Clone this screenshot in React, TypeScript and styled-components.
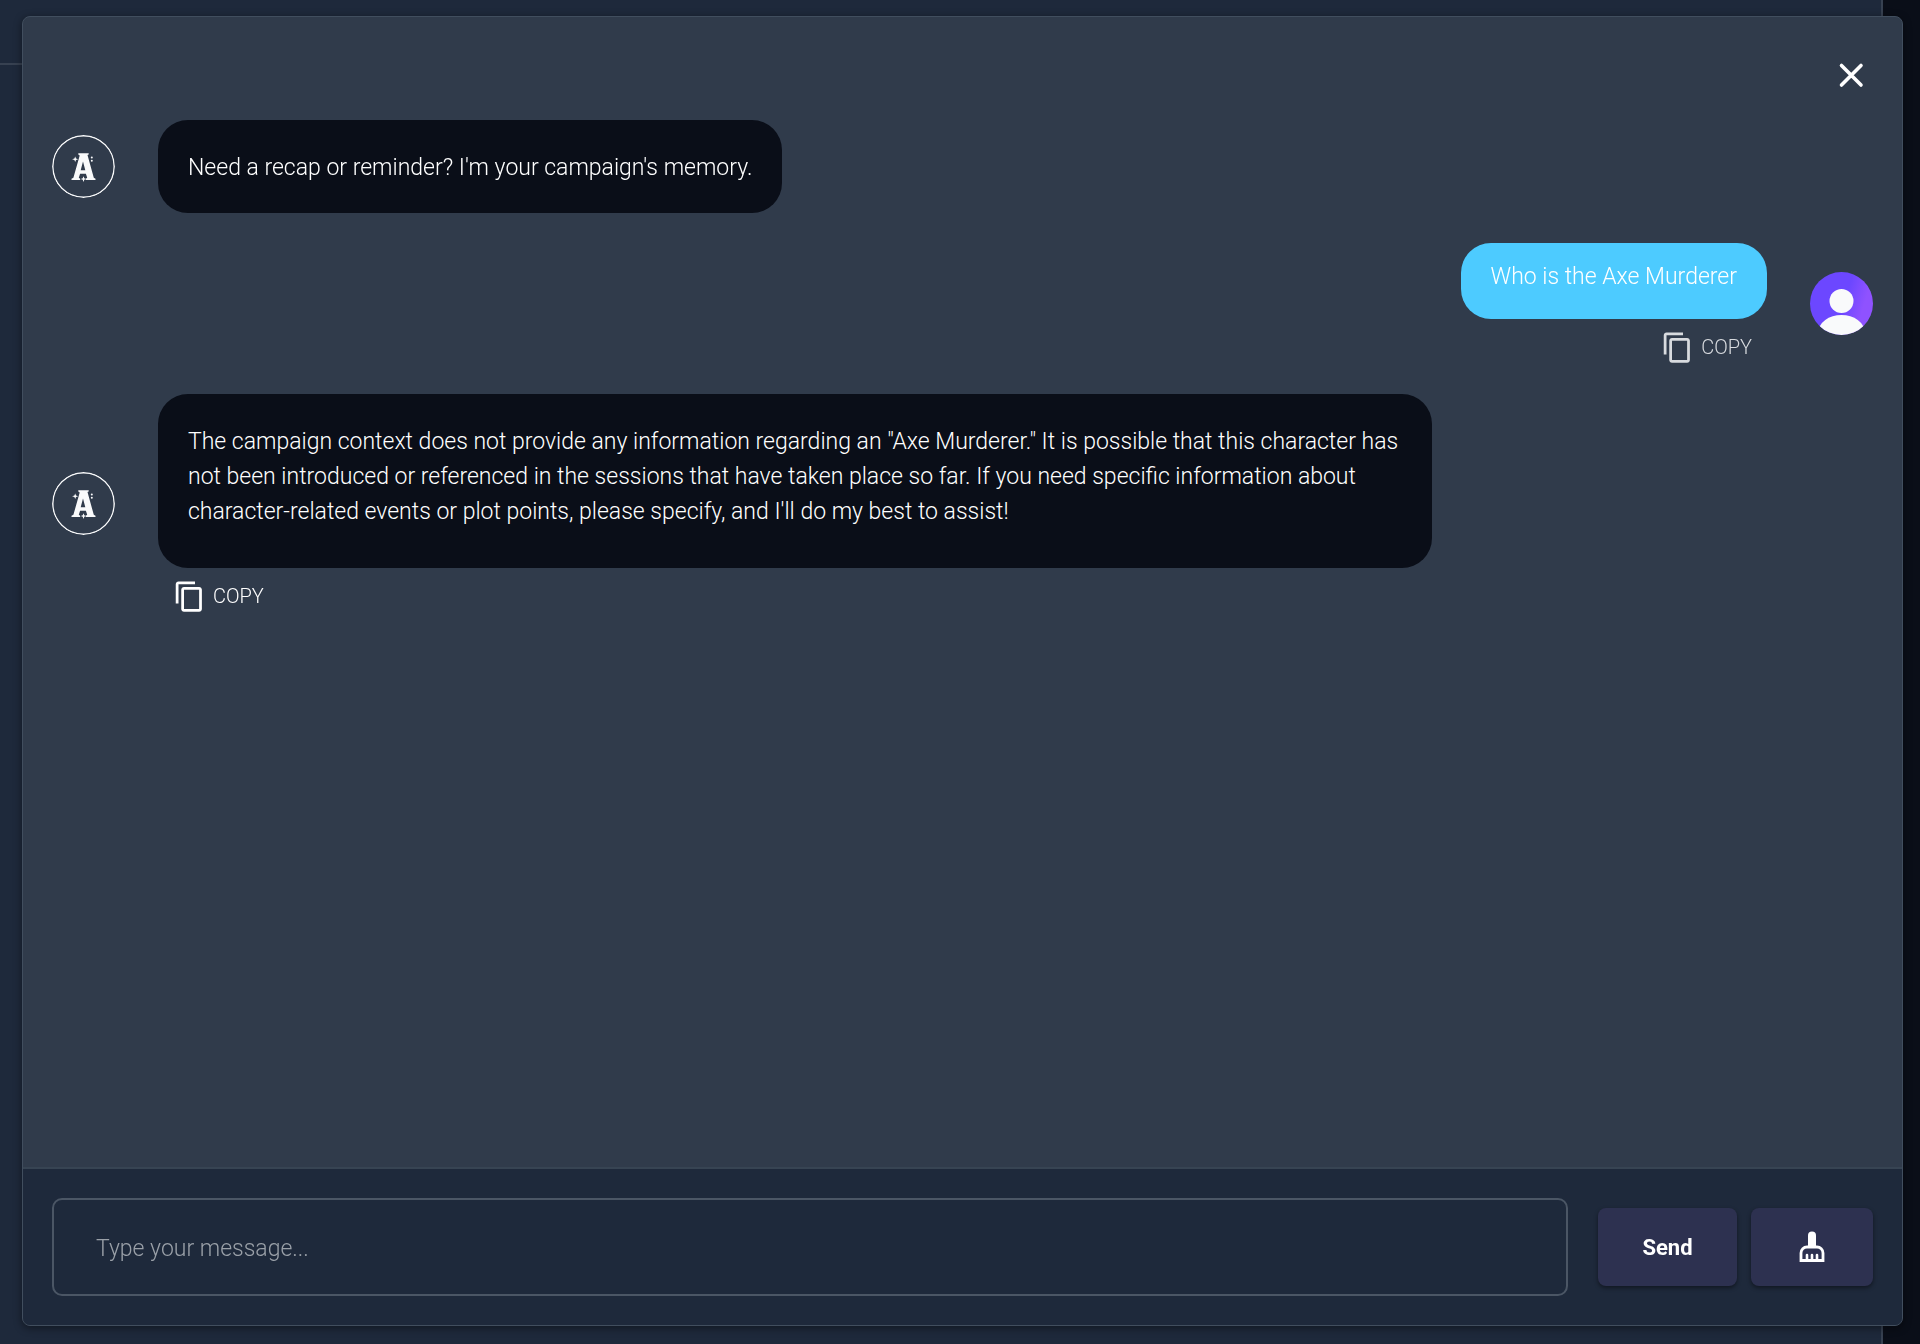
import React from "react";
import styled, { createGlobalStyle } from "styled-components";

const font = `Roboto, "Liberation Sans", sans-serif`;

const GlobalStyle = createGlobalStyle`
  *, *::before, *::after { box-sizing: border-box; }
  body {
    margin: 0;
    background: #0a0e18;
    color: #fff;
    font-family: ${font};
    font-size: 23px;
    font-weight: 300;
    line-height: 35px;
  }
`;

const Page = styled.div`
  min-height: 100vh;
  padding-right: 37px;
  display: flex;
`;

const PagePanel = styled.div`
  flex: 1;
  background: #1e293b;
  border-right: 2px solid #374151;
`;

const PageHeader = styled.div`
  height: 65px;
  border-bottom: 2px solid #374151;
`;

const Overlay = styled.div`
  position: fixed;
  inset: 0;
  padding: 16px 17px 18px 22px;
  display: flex;
`;

const Dialog = styled.section`
  flex: 1;
  display: flex;
  flex-direction: column;
  min-width: 0;
  background: #303b4b;
  border: 1px solid #414e5e;
  border-radius: 8px;
  overflow: hidden;
  box-shadow: 0 2px 8px rgba(0, 0, 0, 0.45);
`;

const DialogBar = styled.header`
  display: flex;
  justify-content: flex-end;
  padding: 40px 32px 25px;
`;

const IconButton = styled.button`
  display: flex;
  padding: 0;
  border: 0;
  background: none;
  color: #fff;
  cursor: pointer;
`;

const Messages = styled.div`
  flex: 1;
  min-height: 0;
  overflow-y: auto;
  display: flex;
  flex-direction: column;
  gap: 30px;
  padding: 0 29px;
`;

const Row = styled.article<{ $own?: boolean }>`
  display: flex;
  flex-direction: ${(p) => (p.$own ? "row-reverse" : "row")};
  align-items: center;
  gap: 43px;
`;

const Column = styled.div<{ $own?: boolean }>`
  flex: 1;
  min-width: 0;
  display: flex;
  flex-direction: column;
  align-items: ${(p) => (p.$own ? "flex-end" : "flex-start")};
  padding-right: ${(p) => (p.$own ? 0 : 16)}px;
`;

const Bubble = styled.p<{ $own?: boolean; $copy?: boolean }>`
  margin: 0;
  max-width: 75%;
  padding: ${(p) => (p.$own ? "16px 30px 25px" : p.$copy ? "30px 30px 39px" : "30px 30px 28px")};
  border-radius: 30px;
  background: ${(p) => (p.$own ? "#4dcbff" : "#0a0e18")};
`;

const CopyButton = styled.button<{ $own?: boolean }>`
  display: flex;
  align-items: center;
  gap: 7px;
  height: 33px;
  margin: 12px 15px 0;
  padding: 0;
  border: 0;
  background: none;
  color: ${(p) => (p.$own ? "#d8dbdf" : "#fff")};
  font: 300 20px/33px ${font};
  cursor: pointer;
`;

const Avatar = styled.div`
  flex: none;
  width: 63px;
  height: 63px;
  border-radius: 50%;
  overflow: hidden;

  svg { display: block; }
`;

const Composer = styled.form`
  display: flex;
  align-items: center;
  gap: 14px;
  padding: 29px;
  background: #1e293b;
  border-top: 2px solid #374453;
`;

const MessageInput = styled.input`
  flex: 1;
  min-width: 0;
  height: 98px;
  margin-right: 16px;
  padding: 2px 42px 0;
  border: 2px solid #4b5665;
  border-radius: 10px;
  background: transparent;
  color: #fff;
  font: 300 23px/35px ${font};
  outline: none;

  &::placeholder { color: #9aa0a8; opacity: 1; }
`;

const ActionButton = styled.button<{ $width: number }>`
  display: flex;
  align-items: center;
  justify-content: center;
  width: ${(p) => p.$width}px;
  height: 78px;
  padding: 0;
  border: 0;
  border-radius: 8px;
  background: #2d3150;
  color: #fff;
  font: 700 22px/35px ${font};
  box-shadow: 0 2px 4px rgba(0, 0, 0, 0.45);
  cursor: pointer;
`;

const CloseIcon = () => (
  <svg width="38" height="38" viewBox="0 0 38 38" fill="none" stroke="currentColor" strokeWidth="3.6" aria-hidden="true">
    <path d="M9.500 8.500 29 28M29 8.500 9.500 28" strokeLinecap="round" />
  </svg>
);

const CopyIcon = () => (
  <svg width="33" height="33" viewBox="0 0 24 24" fill="currentColor" aria-hidden="true">
    <path d="M16 1H4c-1.100 0-2 .9-2 2v14h2V3h12V1zm3 4H8c-1.100 0-2 .9-2 2v14c0 1.100.9 2 2 2h11c1.100 0 2-.9 2-2V7c0-1.100-.9-2-2-2zm0 16H8V7h11v14z" />
  </svg>
);

const BroomIcon = () => (
  <svg width="26" height="32" viewBox="0 0 26 32" fill="none" aria-hidden="true">
    <path d="M9 16V4.500a4 4 0 0 1 8 0V16z" fill="currentColor" />
    <path
      d="M2 29.500V22a6 6 0 0 1 6-6h10a6 6 0 0 1 6 6v7.500z"
      stroke="currentColor"
      strokeWidth="2.800"
    />
    <path d="M8 29v-5M13 29v-5M18 29v-5" stroke="currentColor" strokeWidth="2.600" strokeLinecap="round" />
  </svg>
);

const BotAvatar = () => (
  <Avatar>
    <svg width="63" height="63" viewBox="0 0 63 63" fill="none" role="img" aria-label="Assistant">
      <circle cx="31.500" cy="31.500" r="30.700" stroke="#f9fafb" strokeWidth="1.400" />
      <g fill="#f9fafb">
        <path
          d="M26.300 18.200h10.400v1.300l-1.200.6 6.300 22.700 1.700.9v1.300h-9.700v-1.300l1.400-.9-1.300-4h-5.800l-1.300 4 1.400.9v1.300h-8.700v-1.300l1.900-.9 6.300-22.300-1.400-1zM31 26.500l-2.300 8.700h4.600z"
          fillRule="evenodd"
        />
        <path d="m23.200 21.400.8 2 2.100.8-2.100.8-.8 2-.8-2-2.300-.8 2.300-.8z" />
        <path d="m31.500 41.200.8 2 1.900.8-1.900.8-.8 2.200-.8-2.200-1.900-.8 1.900-.8z" />
        <circle cx="39.800" cy="22.500" r="1" />
        <circle cx="39.800" cy="25.800" r="1" />
      </g>
    </svg>
  </Avatar>
);

const UserAvatar = () => (
  <Avatar>
    <svg width="63" height="63" viewBox="0 0 63 63" role="img" aria-label="You">
      <defs>
        <linearGradient id="user-fill" x1="0" y1="0.300" x2="1" y2="0.600">
          <stop offset="0.550" stopColor="#6c47ff" />
          <stop offset="0.850" stopColor="#8f52ff" />
        </linearGradient>
      </defs>
      <rect width="63" height="63" fill="url(#user-fill)" />
      <circle cx="31.500" cy="29" r="12" fill="#f9fafb" />
      <ellipse cx="31.500" cy="60" rx="23" ry="17" fill="#f9fafb" />
    </svg>
  </Avatar>
);

type Message = { text: string; own?: boolean; copy?: boolean };

const messages: Message[] = [
  { text: "Need a recap or reminder? I'm your campaign's memory." },
  { text: "Who is the Axe Murderer", own: true, copy: true },
  {
    text: `The campaign context does not provide any information regarding an "Axe Murderer." It is possible that this character has not been introduced or referenced in the sessions that have taken place so far. If you need specific information about character-related events or plot points, please specify, and I'll do my best to assist!`,
    copy: true,
  },
];

export default function App() {
  return (
    <>
      <GlobalStyle />
      <Page>
        <PagePanel>
          <PageHeader />
        </PagePanel>
      </Page>
      <Overlay>
        <Dialog role="dialog" aria-label="Campaign chat">
          <DialogBar>
            <IconButton type="button" aria-label="Close">
              <CloseIcon />
            </IconButton>
          </DialogBar>
          <Messages>
            {messages.map((m) => (
              <Row key={m.text} $own={m.own}>
                {m.own ? <UserAvatar /> : <BotAvatar />}
                <Column $own={m.own}>
                  <Bubble $own={m.own} $copy={m.copy}>{m.text}</Bubble>
                  {m.copy && (
                    <CopyButton type="button" $own={m.own}>
                      <CopyIcon />
                      COPY
                    </CopyButton>
                  )}
                </Column>
              </Row>
            ))}
          </Messages>
          <Composer onSubmit={(e) => e.preventDefault()}>
            <MessageInput type="text" aria-label="Message" placeholder="Type your message..." />
            <ActionButton type="submit" $width={139}>Send</ActionButton>
            <ActionButton type="button" $width={122} aria-label="Clear conversation">
              <BroomIcon />
            </ActionButton>
          </Composer>
        </Dialog>
      </Overlay>
    </>
  );
}
